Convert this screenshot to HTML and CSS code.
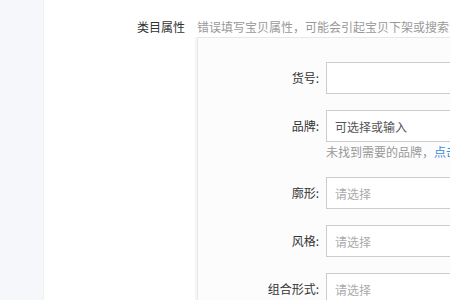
FILE: index.html
```html
<!DOCTYPE html>
<html lang="zh-CN">
<head>
    <meta charset="UTF-8">
    <meta name="viewport" content="width=device-width, initial-scale=1.0">
    <title>类目属性</title>
    <link rel="stylesheet" href="styles.css">
</head>
<body>
    <div class="page">
        <div class="sidebar"></div>
        <div class="main">
            <div class="section">
                <div class="section-label">类目属性</div>
                <div class="section-body">
                    <div class="section-tip">错误填写宝贝属性，可能会引起宝贝下架或搜索流量减少，影响您的正常销售，请认真准确填写！</div>
                    <div class="attr-box">
                        <div class="field">
                            <label class="field-label">货号:</label>
                            <div class="field-control">
                                <input type="text" class="field-input">
                            </div>
                        </div>
                        <div class="field">
                            <label class="field-label">品牌:</label>
                            <div class="field-control">
                                <input type="text" class="field-input dark" placeholder="可选择或输入">
                                <div class="field-hint">未找到需要的品牌，<a href="#">点击申请</a></div>
                            </div>
                        </div>
                        <div class="field">
                            <label class="field-label">廓形:</label>
                            <div class="field-control">
                                <input type="text" class="field-input" placeholder="请选择">
                            </div>
                        </div>
                        <div class="field">
                            <label class="field-label">风格:</label>
                            <div class="field-control">
                                <input type="text" class="field-input" placeholder="请选择">
                            </div>
                        </div>
                        <div class="field">
                            <label class="field-label">组合形式:</label>
                            <div class="field-control">
                                <input type="text" class="field-input" placeholder="请选择">
                            </div>
                        </div>
                    </div>
                </div>
            </div>
        </div>
    </div>
</body>
</html>
```

FILE: styles.css
```css
body {
    margin: 0;
    font-family: "Noto Sans CJK SC", "Liberation Sans", sans-serif;
    font-size: 12px;
    color: #333;
    background-color: white;
    overflow: hidden;
}
.page {
    display: flex;
    height: 300px;
}
.sidebar {
    width: 43px;
    flex-shrink: 0;
    background-color: #f5f7fa;
    border-right: 1px solid #eef0f4;
}
.main {
    flex: 1;
    min-width: 0;
    padding-top: 18px;
}
.section {
    display: flex;
}
.section-label {
    width: 141px;
    flex-shrink: 0;
    margin-right: 12px;
    text-align: right;
    line-height: 18px;
}
.section-body {
    flex: 1;
    min-width: 0;
}
.section-tip {
    color: #999;
    line-height: 18px;
    white-space: nowrap;
    overflow: hidden;
}
.attr-box {
    margin-top: 1px;
    border: 1px solid #e8e8e8;
    border-right: none;
    background-color: #fcfcfc;
    padding: 24px 0 40px;
    box-shadow: -2px 0 0 #f6f6f6;
}
.field {
    display: flex;
    margin-bottom: 16px;
}
.field-label {
    width: 121px;
    flex-shrink: 0;
    margin-right: 7px;
    text-align: right;
    line-height: 32px;
    white-space: nowrap;
}
.field-control {
    flex: 1;
}
.field-input {
    box-sizing: border-box;
    width: 300px;
    height: 32px;
    border: 1px solid #ccc;
    padding: 0 8px;
    font-family: inherit;
    font-size: 12px;
    color: #333;
    background-color: white;
    outline: none;
}
.field-input::placeholder {
    color: #aaa;
}
.field-input.dark::placeholder {
    color: #555;
}
.field-hint {
    margin-top: 1px;
    line-height: 18px;
    color: #999;
    white-space: nowrap;
}
.field-hint a {
    color: #3b8bd9;
    text-decoration: none;
}
```
